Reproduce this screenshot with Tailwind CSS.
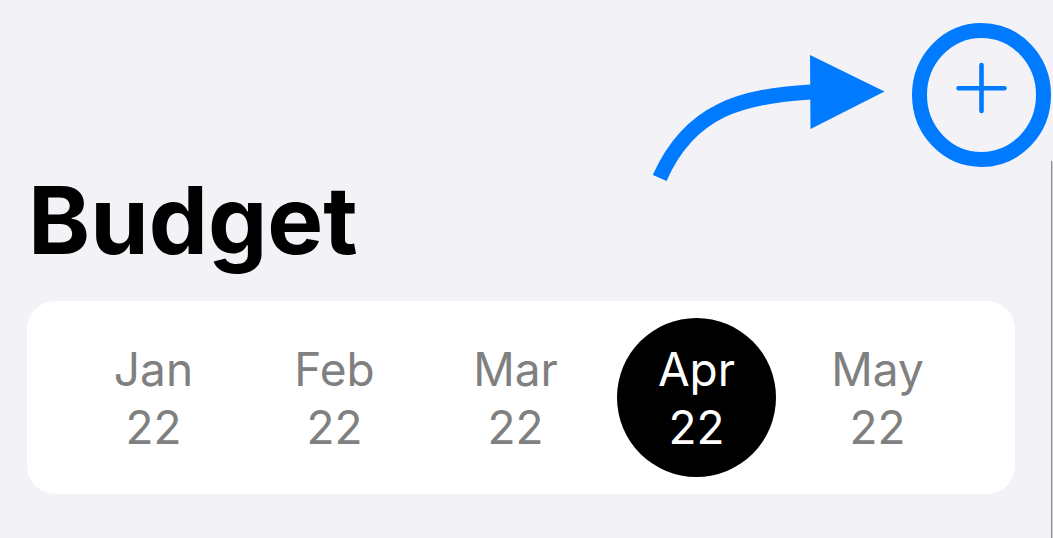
<!DOCTYPE html>
<html lang="en">
<head>
<meta charset="utf-8">
<meta name="viewport" content="width=device-width, initial-scale=1">
<title>Budget</title>
<script src="https://cdn.jsdelivr.net/npm/@tailwindcss/browser@4"></script>
</head>
<body class="relative min-h-screen bg-[#f2f2f7] font-['Inter',sans-serif] text-black">
  <header class="flex items-start justify-end gap-[27px] pt-[23px] pr-[2px]">
    <svg class="mt-8 h-[127px] w-[232px]" viewBox="0 0 232 127" fill="none" aria-hidden="true">
      <path d="M6.7 123C37 54 90 41 158 37" stroke="#007aff" stroke-width="15"/>
      <path d="M157 0L231.5 36.5L157.5 74Z" fill="#007aff"/>
    </svg>
    <button type="button" aria-label="Add budget" class="cursor-pointer">
      <svg class="block h-36 w-[139px]" viewBox="0 0 139 144" fill="none" stroke="#007aff" aria-hidden="true">
        <ellipse cx="69.5" cy="72" rx="62" ry="64.5" stroke-width="15"/>
        <path d="M69.5 42V88M46.5 65.2H92.5" stroke-width="4.6" stroke-linecap="round"/>
      </svg>
    </button>
  </header>
  <main>
    <h1 class="-mt-[10px] px-7 text-[94px] leading-[96px] font-bold">Budget</h1>
    <nav aria-label="Month" class="mt-[33px] mr-[38px] ml-[27px] flex justify-between rounded-[28px] bg-white py-[17px] pr-[58px] pl-[47px] text-[46px] text-[#808080]">
      <button type="button" class="size-[159px] cursor-pointer rounded-full leading-[58px]">Jan<br>22</button>
      <button type="button" class="size-[159px] cursor-pointer rounded-full leading-[58px]">Feb<br>22</button>
      <button type="button" class="size-[159px] cursor-pointer rounded-full leading-[58px]">Mar<br>22</button>
      <button type="button" aria-pressed="true" class="size-[159px] cursor-pointer rounded-full bg-black leading-[58px] text-white">Apr<br>22</button>
      <button type="button" class="size-[159px] cursor-pointer rounded-full leading-[58px]">May<br>22</button>
    </nav>
  </main>
  <div class="absolute top-[161px] right-0 bottom-0 w-[2px] border-l border-[#8e8e93] bg-[#cfced3]" aria-hidden="true"></div>
</body>
</html>
